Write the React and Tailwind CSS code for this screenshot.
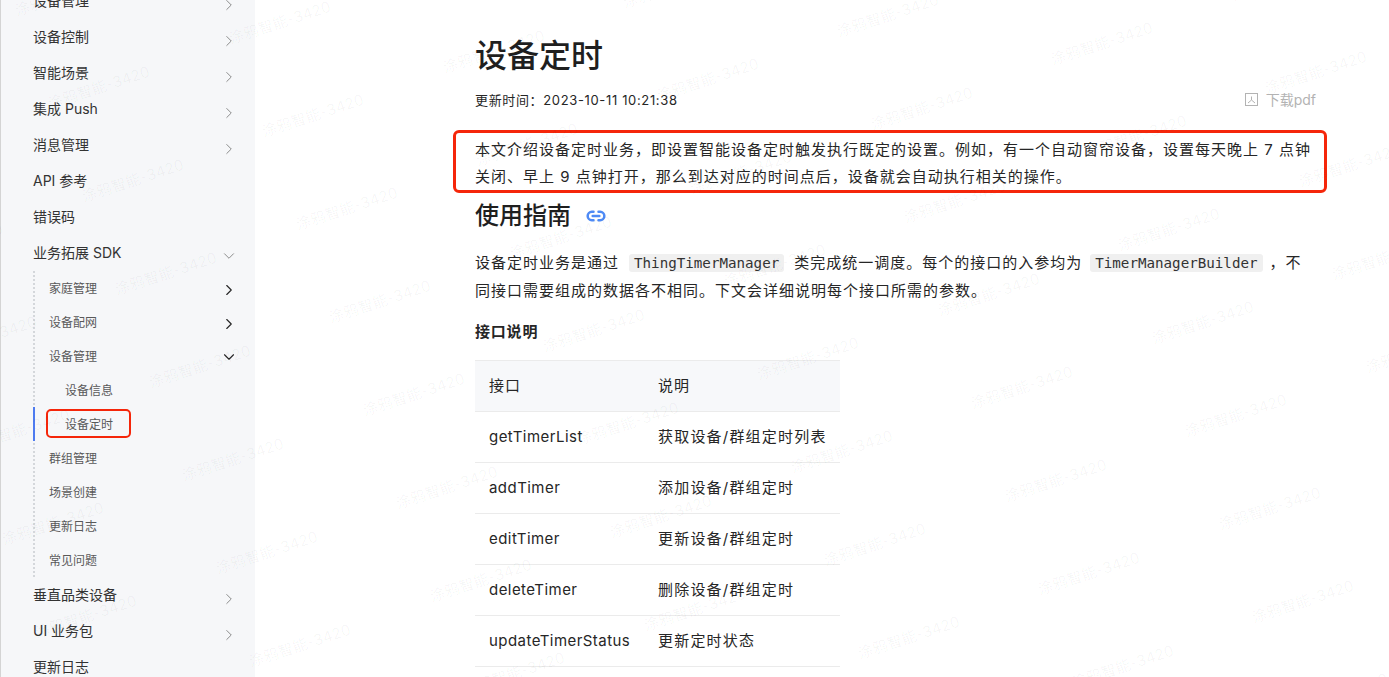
import { ChevronRight, ChevronDown, Link2 } from "lucide-react";

const topBefore = [
  { name: "设备管理", arrow: true },
  { name: "设备控制", arrow: true },
  { name: "智能场景", arrow: true },
  { name: "集成 Push", arrow: true },
  { name: "消息管理", arrow: true },
  { name: "API 参考" },
  { name: "错误码" },
];

const topAfter = [
  { name: "垂直品类设备", arrow: true },
  { name: "UI 业务包", arrow: true },
  { name: "更新日志" },
];

const rows = [
  ["getTimerList", "获取设备/群组定时列表"],
  ["addTimer", "添加设备/群组定时"],
  ["editTimer", "更新设备/群组定时"],
  ["deleteTimer", "删除设备/群组定时"],
  ["updateTimerStatus", "更新定时状态"],
];

// 水印的位置
const marks = [];
for (let i = -3; i < 8; i++) {
  for (let j = -8; j < 9; j++) {
    const x = 313 + i * 214 + j * 33.5;
    const y = 116 + i * 28.5 + j * 93;
    if (x > -80 && x < 1470 && y > -40 && y < 720) marks.push({ x, y });
  }
}

function TopItem({ name, arrow, open }) {
  return (
    <div className="h-9 flex items-center justify-between pl-[33px] pr-[17px] text-[14px] text-[#333]">
      <span className="pb-[2px]">{name}</span>
      {arrow && <ChevronRight size={18} strokeWidth={1.2} className="mt-[8px] text-[#808080]" />}
      {open && <ChevronDown size={18} strokeWidth={1.2} className="mt-[6px] text-[#808080]" />}
    </div>
  );
}

function SubItem({ name, arrow, open, deep, active }) {
  return (
    <div className={`relative h-[34px] flex items-center justify-between pr-[17px] text-[12px] text-[#595959] ${deep ? "pl-[30px]" : "pl-[14px]"}`}>
      {active && (
        <>
          <div className="absolute left-[-2px] top-0 w-[2px] h-[34px] bg-[#4e7bf0]" />
          <div className="absolute left-[11px] top-[2px] w-[85px] h-[29px] border-[2.5px] border-[#f5260a] rounded-[5px]" />
        </>
      )}
      <span className="pt-[2px]">{name}</span>
      {arrow && <ChevronRight size={18} strokeWidth={1.5} className="mt-[4px] text-[#262626]" />}
      {open && <ChevronDown size={18} strokeWidth={1.5} className="mt-[2px] text-[#262626]" />}
    </div>
  );
}

function Code({ children, className }) {
  return (
    <code className={`px-[5px] py-[1px] bg-[#f0f0f0] rounded-[3px] text-[14.2px] tracking-normal text-[#333] font-['DejaVu_Sans_Mono',monospace] ${className}`}>
      {children}
    </code>
  );
}

export default function App() {
  return (
    <div className="relative h-[677px] w-[1389px] overflow-hidden flex bg-white font-['Inter','Noto_Sans_CJK_SC',sans-serif] text-[#262626]">
      <aside className="w-[255px] h-full overflow-hidden shrink-0 bg-[#f6f7f9] border-l border-[#d4d4d4]">
        <div className="-mt-[17px] -ml-px">
          {topBefore.map((t) => (
            <TopItem key={t.name} {...t} />
          ))}
          <TopItem name="业务拓展 SDK" open />
          <div className="ml-[33px] border-l-2 border-dotted border-[#d4d7db]">
            <SubItem name="家庭管理" arrow />
            <SubItem name="设备配网" arrow />
            <SubItem name="设备管理" open />
            <SubItem name="设备信息" deep />
            <SubItem name="设备定时" deep active />
            <SubItem name="群组管理" />
            <SubItem name="场景创建" />
            <SubItem name="更新日志" />
            <SubItem name="常见问题" />
          </div>
          {topAfter.map((t) => (
            <TopItem key={t.name} {...t} />
          ))}
        </div>
      </aside>

      <main className="flex-1 pl-[220px] pr-[73px] pt-[36px] tracking-[1px] text-[15px]">
        <h1 className="h-10 leading-10 text-[32px] font-medium tracking-normal text-[#1f1f1f]">设备定时</h1>
        <div className="mt-[14px] h-5 flex items-center justify-between text-[13px] tracking-[0.65px] pt-[1px]">
          <span>更新时间：2023-10-11 10:21:38</span>
          <span className="flex items-center gap-[8px] text-[14px] tracking-normal text-[#b3b3b3] -mt-[2px]">
            <svg width="13" height="13" viewBox="0 0 13 13" fill="none" stroke="#b3b3b3" strokeWidth="1">
              <rect x="0.5" y="0.5" width="12" height="12" />
              <path d="M3 10 L6.5 7 L10 10 M6.5 7 V3.5" />
            </svg>
            下载pdf
          </span>
        </div>
        <div className="relative mt-[26px]">
          <div className="absolute left-[-22px] right-[-11px] top-[-6px] h-[63px] border-[3px] border-[#f5260a] rounded-[6px]" />
          <p className="leading-[27px]">
            本文介绍设备定时业务，即设置智能设备定时触发执行既定的设置。例如，有一个自动窗帘设备，设置每天晚上 7 点钟关闭、早上 9 点钟打开，那么到达对应的时间点后，设备就会自动执行相关的操作。
          </p>
        </div>
        <h2 className="mt-[10px] h-8 flex items-center gap-[15px] text-[24px] font-medium tracking-normal text-[#1f1f1f]">
          使用指南
          <Link2 size={20} strokeWidth={3} className="text-[#4e8af5]" />
        </h2>
        <p className="mt-[17px] leading-[27px]">
          设备定时业务是通过<Code className="ml-[10px] mr-[10px]">ThingTimerManager</Code>类完成统一调度。每个的接口的入参均为<Code className="ml-[8px] mr-[7px]">TimerManagerBuilder</Code>，不同接口需要组成的数据各不相同。下文会详细说明每个接口所需的参数。
        </p>
        <h4 className="mt-[14px] h-[27px] leading-[27px] font-semibold tracking-[0.8px]">接口说明</h4>
        <table className="mt-[15px] w-[365px] table-fixed border-collapse">
          <thead>
            <tr className="h-[51px] bg-[#f7f8fa] border-y border-[#ebebeb]">
              <th className="w-[169px] pl-[14px] text-left font-normal">接口</th>
              <th className="pl-[14px] text-left font-normal">说明</th>
            </tr>
          </thead>
          <tbody>
            {rows.map(([a, b]) => (
              <tr key={a} className="h-[51px] border-b border-[#ebebeb]">
                <td className="pl-[14px] tracking-[0.45px]">{a}</td>
                <td className="pl-[14px] whitespace-nowrap tracking-[1.2px]">{b}</td>
              </tr>
            ))}
          </tbody>
        </table>
      </main>

      {/* 水印 */}
      <div className="absolute inset-0 pointer-events-none overflow-hidden">
        {marks.map((m) => (
          <span
            key={`${m.x}-${m.y}`}
            className="absolute -translate-x-1/2 -translate-y-1/2 -rotate-[18deg] whitespace-nowrap text-[15px] tracking-[0.2px] text-[rgba(0,0,0,0.04)]"
            style={{ left: m.x, top: m.y }}
          >
            涂鸦智能-3420
          </span>
        ))}
      </div>
    </div>
  );
}
